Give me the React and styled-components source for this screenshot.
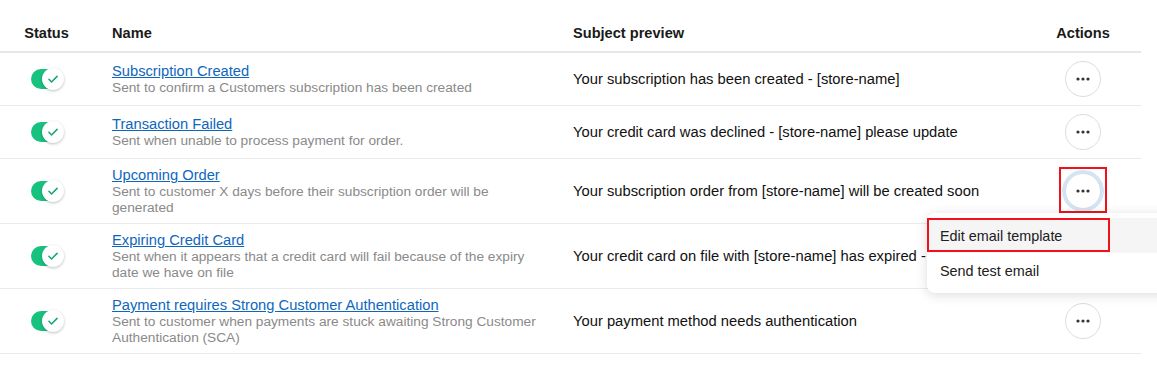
import React from 'react';
import styled, { createGlobalStyle } from 'styled-components';

const GlobalStyle = createGlobalStyle`
  html, body {
    margin: 0;
    padding: 0;
    background: #ffffff;
    overflow: hidden;
  }
  body {
    font-family: "Liberation Sans", Arial, Helvetica, sans-serif;
    color: #1c1c1c;
  }
`;

const templates = [
  {
    name: 'Subscription Created',
    desc: 'Sent to confirm a Customers subscription has been created',
    subject: 'Your subscription has been created - [store-name]',
  },
  {
    name: 'Transaction Failed',
    desc: 'Sent when unable to process payment for order.',
    subject: 'Your credit card was declined - [store-name] please update',
  },
  {
    name: 'Upcoming Order',
    desc: 'Sent to customer X days before their subscription order will be generated',
    subject: 'Your subscription order from [store-name] will be created soon',
    open: true,
  },
  {
    name: 'Expiring Credit Card',
    desc: 'Sent when it appears that a credit card will fail because of the expiry date we have on file',
    subject: 'Your credit card on file with [store-name] has expired - please update',
  },
  {
    name: 'Payment requires Strong Customer Authentication',
    desc: 'Sent to customer when payments are stuck awaiting Strong Customer Authentication (SCA)',
    subject: 'Your payment method needs authentication',
  },
];

class App extends React.Component {
  render() {
    return (
      <Page>
        <GlobalStyle />
        <Table>
          <HeaderRow>
            <HeadCell $center>Status</HeadCell>
            <HeadCell $pad>Name</HeadCell>
            <HeadCell>Subject preview</HeadCell>
            <HeadCell $center>Actions</HeadCell>
          </HeaderRow>

          {templates.map((t) => (
            <Row key={t.name}>
              <StatusCell>
                <Toggle>
                  <Knob>
                    <svg width="14" height="14" viewBox="0 0 24 24" fill="none" stroke="#12a86b" strokeWidth="2.6" strokeLinecap="round" strokeLinejoin="round">
                      <path d="M5 12.5l4.5 4.5L19 7.5" />
                    </svg>
                  </Knob>
                </Toggle>
              </StatusCell>
              <NameCell>
                <NameLink href="#">{t.name}</NameLink>
                <Desc>{t.desc}</Desc>
              </NameCell>
              <SubjectCell>{t.subject}</SubjectCell>
              <ActionCell>
                <DotsButton $focused={t.open}>
                  <svg width="14" height="4" viewBox="0 0 14 4">
                    <circle cx="2" cy="2" r="1.6" fill="#333" />
                    <circle cx="7" cy="2" r="1.6" fill="#333" />
                    <circle cx="12" cy="2" r="1.6" fill="#333" />
                  </svg>
                  {t.open && <Highlight $kind="button" />}
                </DotsButton>
                {t.open && (
                  <Menu>
                    <MenuItem $active>
                      Edit email template
                      <Highlight $kind="item" />
                    </MenuItem>
                    <MenuItem>Send test email</MenuItem>
                  </Menu>
                )}
              </ActionCell>
            </Row>
          ))}
        </Table>
      </Page>
    );
  }
}

export default App;

const Page = styled.div`
  width: 1157px;
  height: 374px;
  background: #fff;
`;

const Table = styled.div`
  width: 1141px;
  display: flex;
  flex-direction: column;
`;

const cols = `93px 480px 452px 116px`;

const HeaderRow = styled.div`
  display: grid;
  grid-template-columns: ${cols};
  align-items: center;
  border-bottom: 2px solid #e6e6eb;
  box-sizing: border-box;
  padding-top: 14px;
  height: 53px;
`;

const HeadCell = styled.div`
  font-size: 14.6px;
  font-weight: 700;
  color: #1a1a1a;
  text-align: ${(p) => (p.$center ? 'center' : 'left')};
  padding-left: ${(p) => (p.$pad ? '19px' : '0')};
`;

const Row = styled.div`
  display: grid;
  grid-template-columns: ${cols};
  align-items: center;
  padding: 7px 0;
  min-height: 38px;
  border-bottom: 1px solid #ebebee;
`;

const StatusCell = styled.div`
  display: flex;
  justify-content: center;
  padding-left: 1px;
`;

const Toggle = styled.div`
  position: relative;
  width: 32px;
  height: 20px;
  border-radius: 10px;
  background: #17c27f;
`;

const Knob = styled.div`
  position: absolute;
  right: -1px;
  top: -1px;
  width: 22px;
  height: 22px;
  border-radius: 50%;
  background: #fff;
  box-shadow: 0 1px 3px rgba(0, 0, 0, 0.25);
  display: flex;
  align-items: center;
  justify-content: center;
`;

const NameCell = styled.div`
  display: flex;
  flex-direction: column;
  padding: 0 28px 0 19px;
`;

const NameLink = styled.a`
  font-size: 14.7px;
  line-height: 18px;
  color: #0e67bd;
  text-decoration: underline;
  align-self: flex-start;
`;

const Desc = styled.div`
  font-size: 13.7px;
  line-height: 16px;
  color: #8a8a8a;
`;

const SubjectCell = styled.div`
  font-size: 14.75px;
  color: #111;
  white-space: nowrap;
`;

const ActionCell = styled.div`
  position: relative;
  display: flex;
  justify-content: center;
`;

const DotsButton = styled.button`
  position: relative;
  width: 36px;
  height: 36px;
  border-radius: 50%;
  border: 1px solid #dcdcdc;
  background: #fff;
  padding: 0;
  display: flex;
  align-items: center;
  justify-content: center;
  box-shadow: ${(p) => (p.$focused ? '0 0 0 3px #cfe5f8' : 'none')};
  cursor: pointer;
`;

const Highlight = styled.span`
  position: absolute;
  border: 2.5px solid #f0121b;
  pointer-events: none;
  ${(p) =>
    p.$kind === 'button'
      ? `left: -7px; top: -7px; width: 44px; height: 42px;`
      : `left: 0; top: 0; width: 179px; height: 30px;`}
`;

const Menu = styled.div`
  position: absolute;
  left: -98px;
  top: 40px;
  width: 260px;
  padding: 5px 0;
  background: #fff;
  border-radius: 8px;
  box-shadow: 0 2px 12px rgba(0, 0, 0, 0.14);
  z-index: 10;
`;

const MenuItem = styled.div`
  position: relative;
  height: 35px;
  display: flex;
  align-items: center;
  padding-left: 13px;
  font-size: 14.4px;
  color: #202020;
  background: ${(p) => (p.$active ? '#f5f5f5' : 'transparent')};
`;
